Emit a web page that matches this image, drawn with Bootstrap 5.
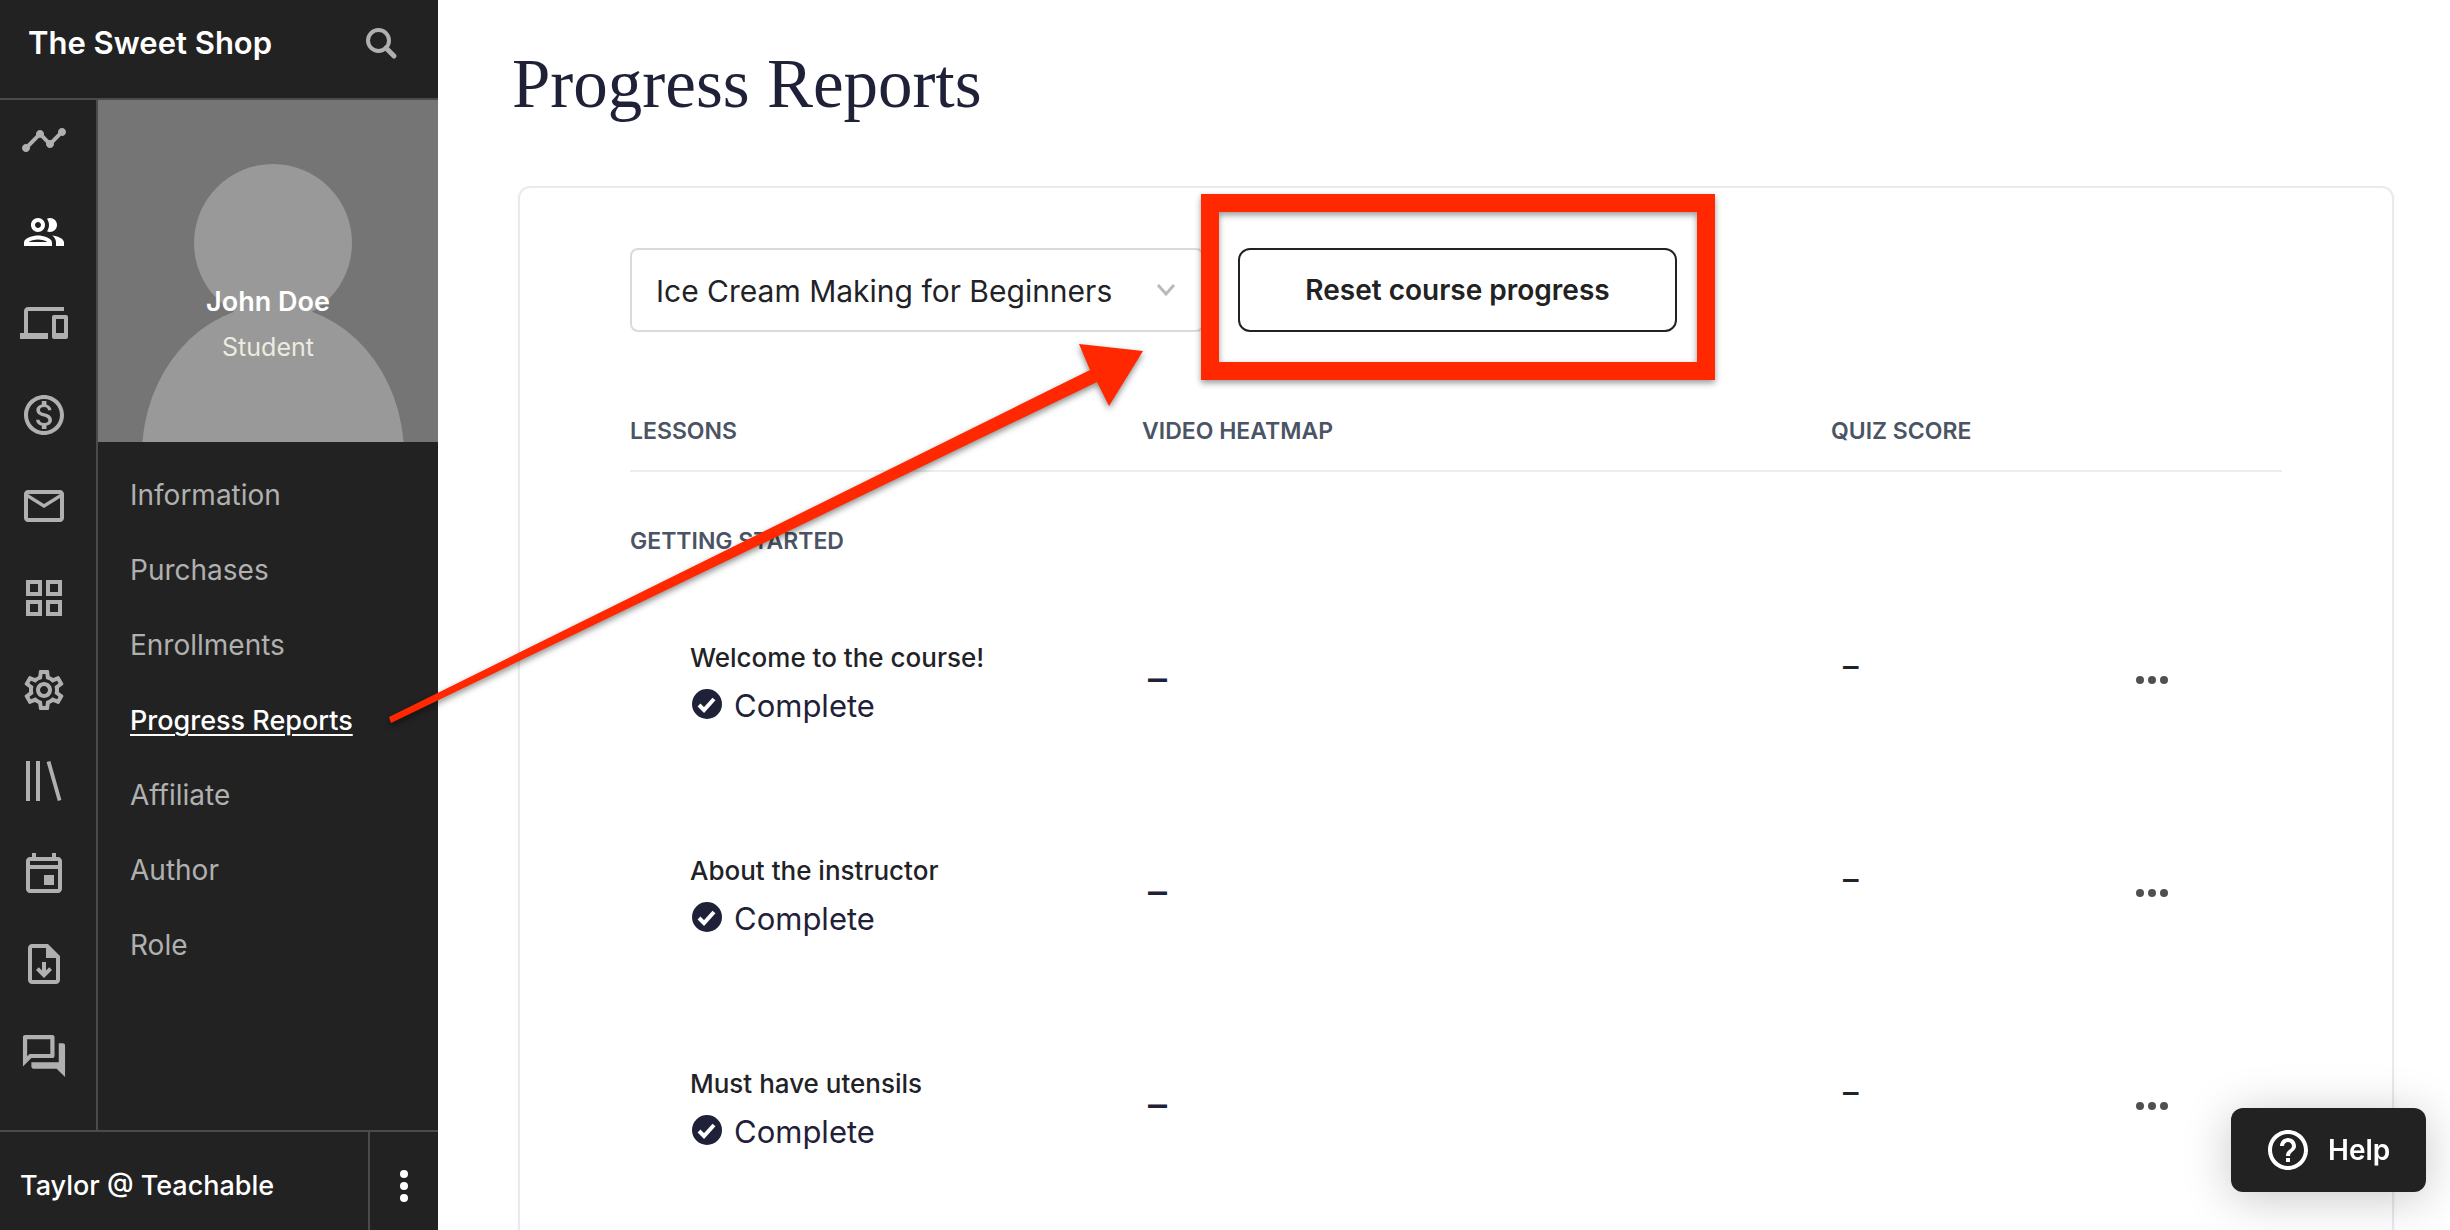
<!DOCTYPE html>
<html lang="en">
<head>
<meta charset="utf-8">
<meta name="viewport" content="width=device-width, initial-scale=1">
<title>Progress Reports</title>
<link href="https://cdn.jsdelivr.net/npm/bootstrap@5.3.0/dist/css/bootstrap.min.css" rel="stylesheet">
<style>
  body { font-family: Inter, "Liberation Sans", sans-serif; color: #1f2328; background: #fff; }
  .plain { border: 0; background: none; padding: 0; }

  /* Sidebar */
  .side { width: 438px; background: #222; }
  .side, .side a, .side button { color: #b0b0b0; }
  .line-b { border-bottom: 2px solid #4b4b4b; }
  .line-t { border-top: 2px solid #4b4b4b; }
  .line-l { border-left: 2px solid #4b4b4b; }
  .line-r { border-right: 2px solid #4b4b4b; }
  .side-head { height: 100px; padding: 0 36px 12px 28px; }
  .shop-name { font-size: 31px; line-height: 40px; font-weight: 600; }
  .rail { width: 98px; padding: 16px 0 50px 20px; }
  .rail a, .rail svg, .ico { display: block; width: 48px; height: 48px; }
  .side .white-ink { color: #fff; }
  svg { fill: currentColor; }
  .avatar { height: 342px; background: #757575; }
  .avatar-art { position: absolute; inset: 0; width: 100%; height: 100%; }
  .avatar-text { position: relative; padding-top: 180px; }
  .person { font-size: 27px; line-height: 44px; font-weight: 600; color: #fff; }
  .role-label { font-size: 25px; line-height: 46px; color: #ecebe0; }
  .side-menu { padding: 16px 0 0 32px; }
  .side-menu a { display: block; font-size: 28px; line-height: 75px; text-decoration: none; }
  .side-menu a.current { text-decoration: underline; text-decoration-thickness: 2px; text-underline-offset: 4px; font-size: 27px; font-weight: 500; color: #fff; }
  .side-foot { height: 100px; }
  .side-foot-name { font-size: 27px; font-weight: 500; padding: 10px 0 0 20px; }
  .side-foot-more { width: 70px; padding-top: 10px; }

  /* Content */
  .content { padding: 0 56px 0 80px; }
  .page-title { font-family: "Liberation Serif", serif; font-size: 69px; line-height: 80px; font-weight: 400; color: #1f2138; margin: 44px 0 62px -6px; }
  .panel { border: 2px solid #e9e9ee; border-radius: 12px; padding: 60px 110px; box-shadow: 0 2px 4px rgba(0, 0, 0, .04); }
  .toolbar { gap: 34px; }
  .course-pick { width: 574px; height: 84px; border: 2px solid #dadada; border-radius: 8px; padding: 2px 64px 0 24px; font-size: 30px; color: #1f2328;
    background-image: url("data:image/svg+xml,%3Csvg xmlns='http://www.w3.org/2000/svg' viewBox='0 0 20 14'%3E%3Cpath d='M2 2l8 9 8-9' fill='none' stroke='%23b9b9c0' stroke-width='3'/%3E%3C/svg%3E");
    background-size: 20px 14px; background-position: right 26px center; }
  .reset-btn { width: 439px; height: 84px; border: 2px solid #222; border-radius: 12px; font-size: 28px; font-weight: 600; color: #222; background: #fff; }
  .callout-box { position: absolute; inset: -54px -38px -48px -37px; border: 18px solid #ff2800; filter: drop-shadow(0 3px 3px rgba(0, 0, 0, .4)); pointer-events: none; }

  .report { width: 100%; table-layout: fixed; margin-top: 60px; }
  .report th { font-size: 23px; line-height: 26px; font-weight: 600; color: #4a5464; padding: 26px 0; text-transform: uppercase; }
  .report thead tr { border-bottom: 2px solid #e9eeee; }
  .report th.unit { padding: 56px 0 24px; }
  .w-lesson { width: 31%; }
  .w-heat { width: 41.7%; }
  .w-quiz { width: 18.4%; }
  .report td { height: 213px; vertical-align: top; padding: 60px 0 0; }
  .report td.lesson { padding-left: 60px; }
  .lesson-name { font-size: 26px; line-height: 40px; font-weight: 500; }
  .lesson-state { font-size: 31px; line-height: 56px; color: #1f2138; gap: 10px; }
  .lesson-state svg { width: 34px; height: 34px; }
  .report td.heat { font-size: 38px; line-height: 80px; font-weight: 500; padding-left: 6px; color: #1f2138; }
  .report td.quiz { font-size: 31px; line-height: 56px; font-weight: 500; padding-left: 12px; }
  .dots { color: #505050; line-height: 0; display: block; margin-top: 34px; }

  .help-btn { position: fixed; right: 24px; bottom: 38px; width: 195px; height: 84px; border-radius: 12px; background: #222; color: #fff; font-size: 28px; font-weight: 600; gap: 16px; box-shadow: 0 6px 48px rgba(0, 0, 0, .22); padding: 0 32px; }
  .callout-arrow { position: absolute; left: 0; top: 0; filter: drop-shadow(0 3px 3px rgba(0, 0, 0, .45)); pointer-events: none; }
</style>
<script src="https://cdn.jsdelivr.net/npm/bootstrap@5.3.0/dist/js/bootstrap.bundle.min.js"></script>
</head>
<body class="position-relative">
<div class="d-flex vh-100 overflow-hidden">
  <aside class="side d-flex flex-column flex-shrink-0">
    <header class="side-head line-b d-flex align-items-center justify-content-between">
      <div class="shop-name white-ink">The Sweet Shop</div>
      <button class="plain" type="button" aria-label="Search">
        <svg class="d-block" width="42" height="42" viewBox="0 0 42 42"><g fill="none" stroke="currentColor" stroke-width="4"><circle cx="18.500" cy="18.500" r="10.500"/><path d="M26 26l8 8" stroke-width="5" stroke-linecap="round"/></g></svg>
      </button>
    </header>
    <div class="d-flex flex-fill">
      <nav class="rail line-r d-flex flex-column justify-content-between" aria-label="Main">
        <a href="#" aria-label="Dashboard"><svg viewBox="0 0 24 24"><path d="M23 8c0 1.100-.9 2-2 2-.18 0-.35-.02-.51-.07l-3.560 3.550c.05.16.07.34.07.52 0 1.100-.9 2-2 2s-2-.9-2-2c0-.18.02-.36.07-.52l-2.550-2.550c-.16.05-.34.07-.52.07s-.36-.02-.52-.07l-4.550 4.560c.05.16.07.33.07.51 0 1.100-.9 2-2 2s-2-.9-2-2 .9-2 2-2c.18 0 .35.02.51.07l4.560-4.550C8.020 9.360 8 9.180 8 9c0-1.100.9-2 2-2s2 .9 2 2c0 .18-.02.36-.07.52l2.550 2.550c.16-.05.34-.07.52-.07s.36.02.52.07l3.550-3.560C19.020 8.350 19 8.180 19 8c0-1.100.9-2 2-2s2 .9 2 2z"/></svg></a>
        <a href="#" class="white-ink" aria-label="Users"><svg viewBox="0 0 24 24"><path d="M9 13.750c-2.340 0-7 1.170-7 3.500V19h14v-1.750c0-2.330-4.660-3.500-7-3.500zM4.340 17c.84-.58 2.870-1.250 4.660-1.250s3.820.67 4.660 1.250H4.340zM9 12c1.930 0 3.500-1.570 3.500-3.500S10.930 5 9 5 5.500 6.570 5.500 8.500 7.070 12 9 12zm0-5c.83 0 1.500.67 1.500 1.500S9.830 10 9 10s-1.500-.67-1.500-1.500S8.170 7 9 7zm7.040 6.810c1.160.84 1.960 1.960 1.960 3.440V19h4v-1.750c0-2.020-3.500-3.170-5.960-3.440zM15 12c1.930 0 3.500-1.570 3.500-3.500S16.930 5 15 5c-.54 0-1.040.13-1.500.35.63.89 1 1.980 1 3.150s-.37 2.260-1 3.150c.46.22.96.35 1.500.35z"/></svg></a>
        <a href="#" aria-label="Site"><svg viewBox="0 0 24 24"><path d="M4 6h18V4H4c-1.100 0-2 .9-2 2v11H0v3h14v-3H4V6zm19 2h-6c-.55 0-1 .45-1 1v10c0 .55.45 1 1 1h6c.55 0 1-.45 1-1V9c0-.55-.45-1-1-1zm-1 9h-4v-7h4v7z"/></svg></a>
        <a href="#" aria-label="Sales"><svg viewBox="0 0 24 24"><path d="M12 2C6.480 2 2 6.480 2 12s4.480 10 10 10 10-4.480 10-10S17.520 2 12 2zm0 18c-4.410 0-8-3.590-8-8s3.590-8 8-8 8 3.590 8 8-3.590 8-8 8zm.31-8.860c-1.770-.45-2.340-.94-2.340-1.670 0-.84.79-1.430 2.100-1.430 1.380 0 1.900.66 1.940 1.640h1.710c-.05-1.340-.87-2.570-2.490-2.970V5H10.900v1.690c-1.510.32-2.720 1.300-2.720 2.810 0 1.790 1.490 2.690 3.660 3.210 1.950.46 2.340 1.150 2.340 1.870 0 .53-.39 1.390-2.100 1.390-1.600 0-2.230-.72-2.320-1.640H8.040c.1 1.700 1.360 2.660 2.860 2.970V19h2.340v-1.670c1.520-.29 2.720-1.160 2.730-2.770-.01-2.200-1.900-2.960-3.660-3.420z"/></svg></a>
        <a href="#" aria-label="Emails"><svg viewBox="0 0 24 24"><path d="M20 4H4c-1.100 0-2 .9-2 2v12c0 1.100.9 2 2 2h16c1.100 0 2-.9 2-2V6c0-1.100-.9-2-2-2zm0 14H4V8l8 5 8-5v10zm-8-7L4 6h16l-8 5z"/></svg></a>
        <a href="#" aria-label="Apps"><svg viewBox="0 0 24 24"><path d="M3 3v8h8V3H3zm6 6H5V5h4v4zm-6 4v8h8v-8H3zm6 6H5v-4h4v4zm4-16v8h8V3h-8zm6 6h-4V5h4v4zm-6 4v8h8v-8h-8zm6 6h-4v-4h4v4z"/></svg></a>
        <a href="#" aria-label="Settings"><svg viewBox="0 0 24 24"><path d="M19.430 12.980c.04-.32.07-.64.07-.98 0-.34-.03-.66-.07-.98l2.110-1.650c.19-.15.24-.42.12-.64l-2-3.460c-.09-.16-.26-.25-.44-.25-.06 0-.12.01-.17.03l-2.490 1c-.52-.4-1.080-.73-1.690-.98l-.38-2.650C14.460 2.180 14.250 2 14 2h-4c-.25 0-.46.18-.49.42l-.38 2.650c-.61.25-1.170.59-1.690.98l-2.490-1c-.06-.02-.12-.03-.18-.03-.17 0-.34.09-.43.25l-2 3.460c-.13.22-.07.49.12.64l2.110 1.650c-.04.32-.07.65-.07.98 0 .33.03.66.07.98l-2.110 1.650c-.19.15-.24.42-.12.64l2 3.460c.09.16.26.25.44.25.06 0 .12-.01.17-.03l2.490-1c.52.4 1.080.73 1.690.98l.38 2.650c.03.24.24.42.49.42h4c.25 0 .46-.18.49-.42l.38-2.650c.61-.25 1.170-.59 1.690-.98l2.490 1c.06.02.12.03.18.03.17 0 .34-.09.43-.25l2-3.460c.12-.22.07-.49-.12-.64l-2.110-1.650zm-1.980-1.710c.04.31.05.52.05.73 0 .21-.02.43-.05.73l-.14 1.130.89.7 1.080.84-.7 1.210-1.270-.51-1.040-.42-.9.68c-.43.32-.84.56-1.250.73l-1.060.43-.16 1.130-.2 1.350h-1.400l-.19-1.350-.16-1.130-1.060-.43c-.43-.18-.83-.41-1.230-.71l-.91-.7-1.060.43-1.270.51-.7-1.210 1.080-.84.89-.7-.14-1.130c-.03-.31-.05-.54-.05-.74s.02-.43.05-.73l.14-1.130-.89-.7-1.080-.84.7-1.210 1.270.51 1.040.42.9-.68c.43-.32.84-.56 1.250-.73l1.060-.43.16-1.130.2-1.350h1.390l.19 1.350.16 1.130 1.060.43c.43.18.83.41 1.230.71l.91.7 1.060-.43 1.270-.51.7 1.210-1.070.85-.89.7.14 1.130zM12 8c-2.210 0-4 1.790-4 4s1.790 4 4 4 4-1.790 4-4-1.790-4-4-4zm0 6c-1.100 0-2-.9-2-2s.9-2 2-2 2 .9 2 2-.9 2-2 2z"/></svg></a>
        <a href="#" aria-label="Library"><svg viewBox="0 0 24 24"><path d="M3 2h2v20H3zM8 2h2v20H8zM13.300 2.500l1.900-.5 5.500 19.500-1.800.5z"/></svg></a>
        <a href="#" aria-label="Calendar"><svg viewBox="0 0 24 24"><path d="M19 4h-1V2h-2v2H8V2H6v2H5c-1.100 0-2 .9-2 2v14c0 1.100.9 2 2 2h14c1.100 0 2-.9 2-2V6c0-1.100-.9-2-2-2zm0 16H5V10h14v10zm0-12H5V6h14v2zM12 13h5v5h-5z"/></svg></a>
        <a href="#" aria-label="Downloads"><svg viewBox="0 0 24 24"><path d="M14 2H6c-1.100 0-2 .9-2 2v16c0 1.100.9 2 2 2h12c1.100 0 2-.9 2-2V8l-6-6zM6 20V4h7v5h5v11H6z"/><path d="M11 11h2v4.200l1.600-1.600L16 15l-4 4-4-4 1.400-1.400 1.600 1.600z"/></svg></a>
        <a href="#" aria-label="Community"><svg viewBox="0.6 0.6 22.8 22.8"><path d="M15 4v7H5.170L4 12.170V4h11m1-2H3c-.55 0-1 .45-1 1v14l4-4h10c.55 0 1-.45 1-1V3c0-.55-.45-1-1-1zm5 4h-2v9H6v2c0 .55.45 1 1 1h11l4 4V7c0-.55-.45-1-1-1z"/></svg></a>
      </nav>
      <div class="flex-fill">
        <div class="avatar position-relative text-center">
          <svg class="avatar-art" viewBox="0 0 340 342" preserveAspectRatio="xMidYMax slice"><g fill="#999"><circle cx="175" cy="143" r="79"/><ellipse cx="175" cy="355" rx="131" ry="150"/></g></svg>
          <div class="avatar-text">
            <div class="person">John Doe</div>
            <div class="role-label">Student</div>
          </div>
        </div>
        <nav class="side-menu" aria-label="User">
          <a href="#">Information</a>
          <a href="#">Purchases</a>
          <a href="#">Enrollments</a>
          <a href="#" class="current" aria-current="page">Progress Reports</a>
          <a href="#">Affiliate</a>
          <a href="#">Author</a>
          <a href="#">Role</a>
        </nav>
      </div>
    </div>
    <footer class="side-foot line-t d-flex">
      <div class="side-foot-name white-ink flex-fill d-flex align-items-center">Taylor @ Teachable</div>
      <button class="plain side-foot-more line-l white-ink d-flex align-items-center justify-content-center" type="button" aria-label="Account menu">
        <svg width="8" height="32" viewBox="0 0 8 32"><circle cx="4" cy="4" r="4"/><circle cx="4" cy="16" r="4"/><circle cx="4" cy="28" r="4"/></svg>
      </button>
    </footer>
  </aside>

  <main class="content flex-fill">
    <h1 class="page-title">Progress Reports</h1>
    <section class="panel">
      <div class="toolbar d-flex">
        <select class="form-select course-pick" aria-label="Course"><option>Ice Cream Making for Beginners</option></select>
        <div class="position-relative">
          <button class="btn reset-btn" type="button">Reset course progress</button>
          <div class="callout-box"></div>
        </div>
      </div>
      <table class="report">
        <thead>
          <tr><th class="w-lesson" scope="col">Lessons</th><th class="w-heat" scope="col">Video heatmap</th><th class="w-quiz" scope="col">Quiz score</th><th aria-label="Actions"></th></tr>
        </thead>
        <tbody>
          <tr><th class="unit" colspan="4" scope="colgroup">Getting started</th></tr>
          <tr>
            <td class="lesson"><div class="lesson-name">Welcome to the course!</div><div class="lesson-state d-flex align-items-center"><svg viewBox="0 0 34 34"><circle cx="17" cy="15" r="15"/><path d="M9 16l5 5 10-11" fill="none" stroke="#fff" stroke-width="4"/></svg>Complete</div></td>
            <td class="heat">–</td><td class="quiz">–</td>
            <td><button class="plain dots" type="button" aria-label="More"><svg width="34" height="16" viewBox="0 0 34 16"><circle cx="5" cy="8" r="4"/><circle cx="17" cy="8" r="4"/><circle cx="29" cy="8" r="4"/></svg></button></td>
          </tr>
          <tr>
            <td class="lesson"><div class="lesson-name">About the instructor</div><div class="lesson-state d-flex align-items-center"><svg viewBox="0 0 34 34"><circle cx="17" cy="15" r="15"/><path d="M9 16l5 5 10-11" fill="none" stroke="#fff" stroke-width="4"/></svg>Complete</div></td>
            <td class="heat">–</td><td class="quiz">–</td>
            <td><button class="plain dots" type="button" aria-label="More"><svg width="34" height="16" viewBox="0 0 34 16"><circle cx="5" cy="8" r="4"/><circle cx="17" cy="8" r="4"/><circle cx="29" cy="8" r="4"/></svg></button></td>
          </tr>
          <tr>
            <td class="lesson"><div class="lesson-name">Must have utensils</div><div class="lesson-state d-flex align-items-center"><svg viewBox="0 0 34 34"><circle cx="17" cy="15" r="15"/><path d="M9 16l5 5 10-11" fill="none" stroke="#fff" stroke-width="4"/></svg>Complete</div></td>
            <td class="heat">–</td><td class="quiz">–</td>
            <td><button class="plain dots" type="button" aria-label="More"><svg width="34" height="16" viewBox="0 0 34 16"><circle cx="5" cy="8" r="4"/><circle cx="17" cy="8" r="4"/><circle cx="29" cy="8" r="4"/></svg></button></td>
          </tr>
        </tbody>
      </table>
    </section>
  </main>
</div>

<svg class="callout-arrow" width="1160" height="740" viewBox="0 0 1160 740" aria-hidden="true"><path fill="#ff2800" d="M389 717L1090 370 1079 344 1143 351 1109 406 1097 382 391 723z"/></svg>

<button class="btn help-btn d-flex align-items-center" type="button">
  <svg class="ico flex-shrink-0" viewBox="0 0 24 24"><path d="M11 18h2v-2h-2v2zm1-16C6.480 2 2 6.480 2 12s4.480 10 10 10 10-4.480 10-10S17.520 2 12 2zm0 18c-4.410 0-8-3.590-8-8s3.590-8 8-8 8 3.590 8 8-3.590 8-8 8zm0-14c-2.210 0-4 1.790-4 4h2c0-1.100.9-2 2-2s2 .9 2 2c0 2-3 1.750-3 5h2c0-2.250 3-2.500 3-5 0-2.210-1.790-4-4-4z"/></svg>
  Help
</button>
</body>
</html>
